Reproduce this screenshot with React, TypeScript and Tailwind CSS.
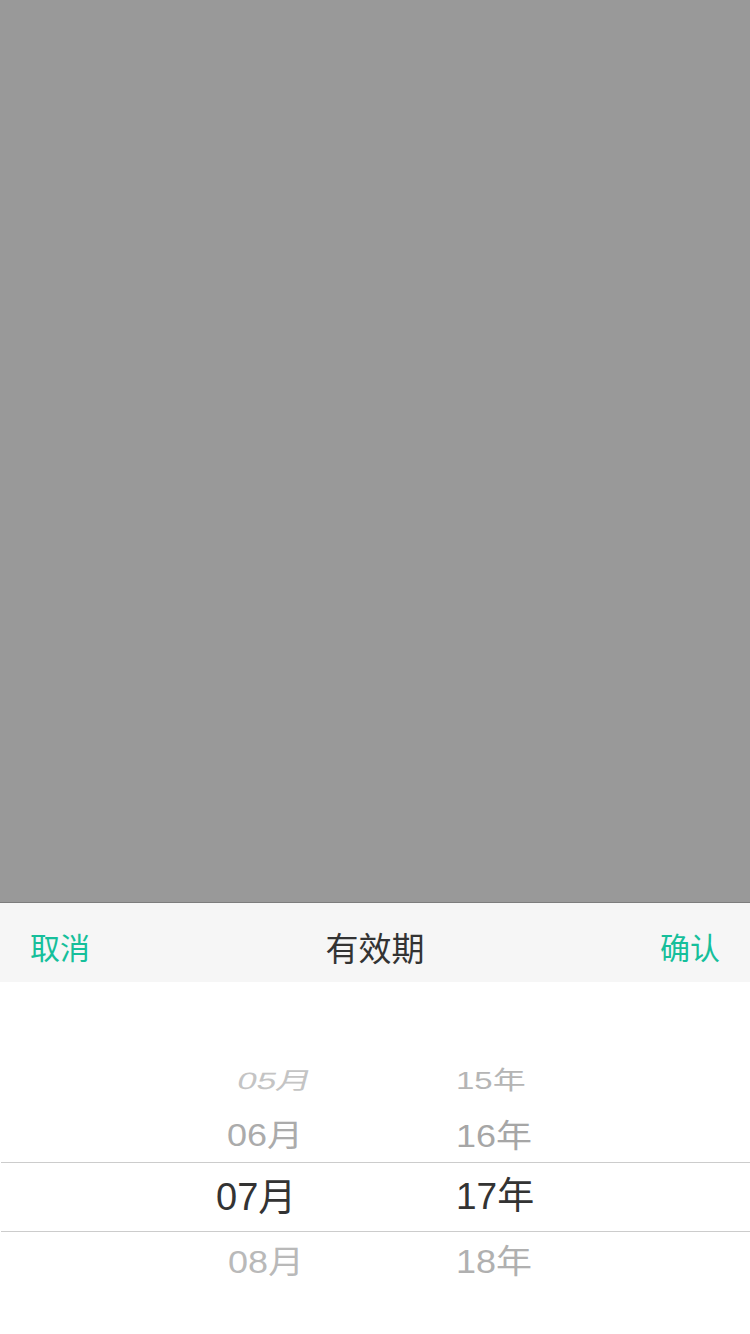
import React from "react";

const font = { fontFamily: '"Liberation Sans", "Noto Sans CJK SC", sans-serif' };

export default function App() {
  return (
    <div className="w-[750px] h-[1334px] flex flex-col bg-[#999999] overflow-hidden" style={font}>
      <div className="h-[902px] shrink-0 bg-[#999999]" />
      <div className="h-px shrink-0 bg-[#7d7d7d]" />
      <div className="h-[79px] shrink-0 bg-[#f6f6f6] flex items-center justify-between px-[30px] pt-[7px]">
        <span className="text-[30px] leading-none text-[#16bf9b] font-['Noto_Sans_CJK_SC',sans-serif]">取消</span>
        <span className="text-[33px] leading-none text-[#333333] font-['Noto_Sans_CJK_SC',sans-serif] pt-[3px]">有效期</span>
        <span className="text-[30px] leading-none text-[#16bf9b] font-['Noto_Sans_CJK_SC',sans-serif]">确认</span>
      </div>
      <div className="flex-1 bg-white flex flex-col">
        <div className="h-[70px] shrink-0" />
        {/* row 05 / 15 */}
        <div className="h-[58px] shrink-0 flex items-center">
          <div className="w-[456px] shrink-0 pl-[238px]">
            <span className="inline-block text-[35px] leading-none text-[#c4c4c4] scale-y-[0.68] -skew-x-[10deg]">05月</span>
          </div>
          <div>
            <span className="inline-block text-[33px] leading-none text-[#b5b5b5] scale-y-[0.75]">15年</span>
          </div>
        </div>
        {/* row 06 / 16 */}
        <div className="h-[52px] shrink-0 flex items-center">
          <div className="w-[456px] shrink-0 pl-[227px]">
            <span className="inline-block text-[36px] leading-none text-[#ababab] scale-y-[0.86]">06月</span>
          </div>
          <div>
            <span className="inline-block text-[36px] leading-none text-[#a6a6a6] scale-y-[0.88]">16年</span>
          </div>
        </div>
        {/* selected */}
        <div className="h-[70px] shrink-0 flex items-center border-y border-[#cccccc] ml-px">
          <div className="w-[455px] shrink-0 pl-[215px]">
            <span className="inline-block text-[38px] leading-none text-[#333333]">07月</span>
          </div>
          <div>
            <span className="inline-block text-[37px] leading-none text-[#333333]">17年</span>
          </div>
        </div>
        {/* row 08 / 18 */}
        <div className="h-[60px] shrink-0 flex items-center">
          <div className="w-[456px] shrink-0 pl-[228px]">
            <span className="inline-block text-[36px] leading-none text-[#b9b9b9] scale-y-[0.88]">08月</span>
          </div>
          <div>
            <span className="inline-block text-[36px] leading-none text-[#b0b0b0] scale-y-[0.9]">18年</span>
          </div>
        </div>
      </div>
    </div>
  );
}
